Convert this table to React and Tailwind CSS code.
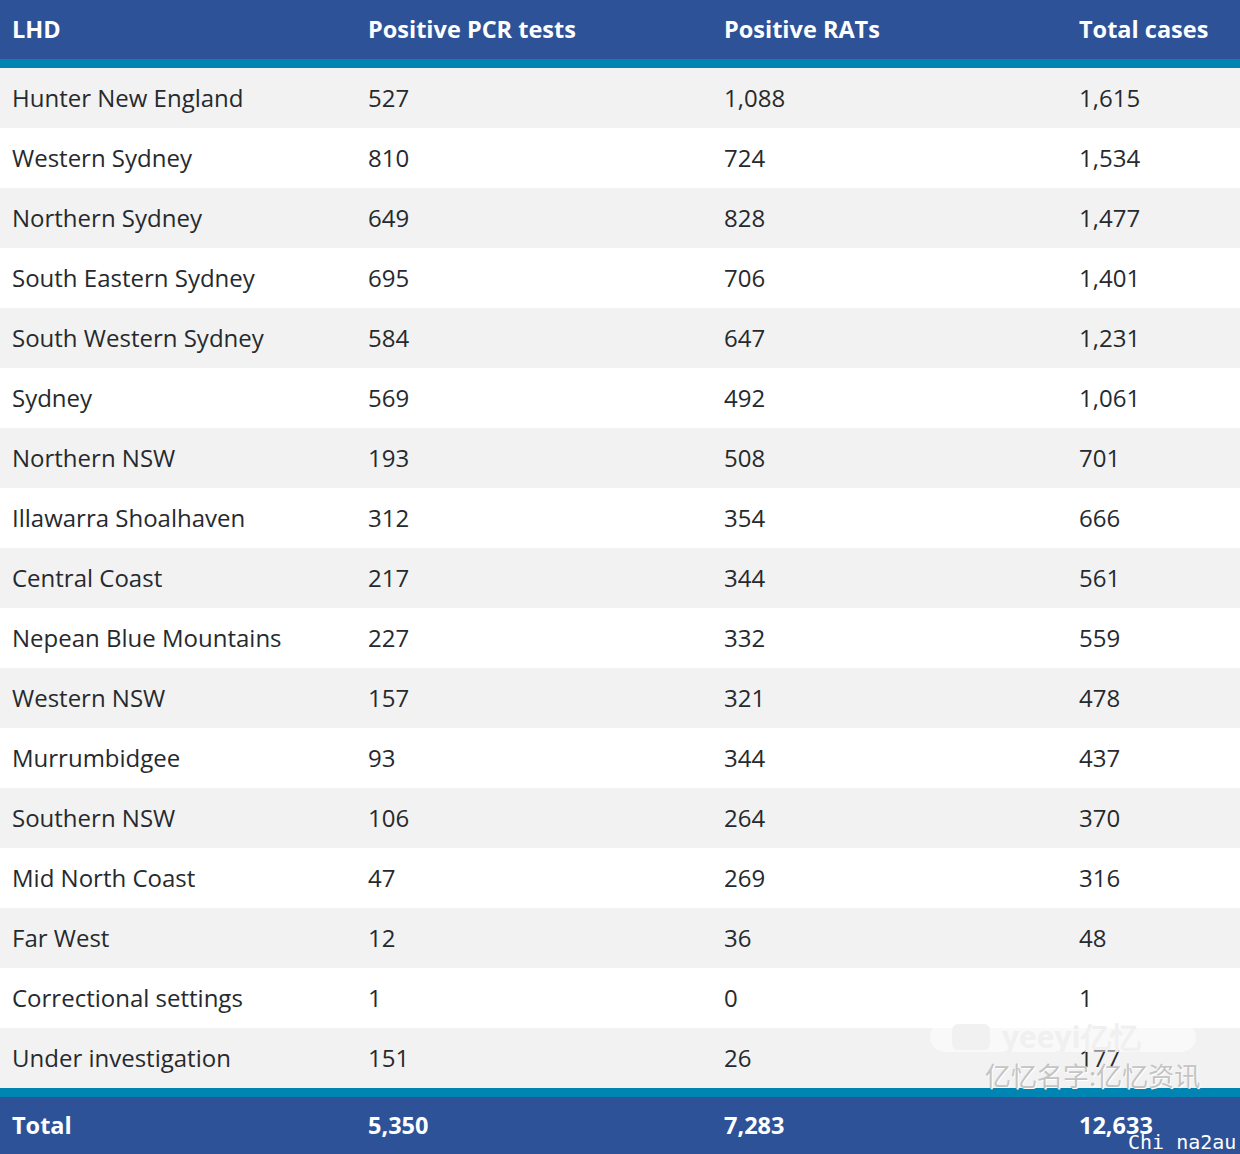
import React from 'react';

const rows = [
  ['Hunter New England', '527', '1,088', '1,615'],
  ['Western Sydney', '810', '724', '1,534'],
  ['Northern Sydney', '649', '828', '1,477'],
  ['South Eastern Sydney', '695', '706', '1,401'],
  ['South Western Sydney', '584', '647', '1,231'],
  ['Sydney', '569', '492', '1,061'],
  ['Northern NSW', '193', '508', '701'],
  ['Illawarra Shoalhaven', '312', '354', '666'],
  ['Central Coast', '217', '344', '561'],
  ['Nepean Blue Mountains', '227', '332', '559'],
  ['Western NSW', '157', '321', '478'],
  ['Murrumbidgee', '93', '344', '437'],
  ['Southern NSW', '106', '264', '370'],
  ['Mid North Coast', '47', '269', '316'],
  ['Far West', '12', '36', '48'],
  ['Correctional settings', '1', '0', '1'],
  ['Under investigation', '151', '26', '177'],
];

export default function App() {
  return (
    <div className="relative w-[1240px] h-[1154px] overflow-hidden bg-white font-['Open_Sans',sans-serif]">
      <div className="grid grid-cols-[356px_356px_355px_1fr] h-[59px] items-center bg-[#2d5297] text-white font-bold text-[23.5px] border-b-[9px] border-[#0085b3] box-content">
        <div className="pl-3">LHD</div>
        <div className="pl-3">Positive PCR tests</div>
        <div className="pl-3">Positive RATs</div>
        <div className="pl-3">Total cases</div>
      </div>
      {rows.map((r, i) => (
        <div
          key={r[0]}
          className={`grid grid-cols-[356px_356px_355px_1fr] h-[60px] items-center text-[24px] text-[#262a2e] ${i % 2 === 0 ? 'bg-[#f2f2f2]' : 'bg-white'}`}
        >
          {r.map((c, j) => (
            <div key={j} className="pl-3">{c}</div>
          ))}
        </div>
      ))}
      <div className="grid grid-cols-[356px_356px_355px_1fr] h-[57px] items-center bg-[#2d5297] text-white font-bold text-[23.5px] border-t-[9px] border-[#0085b3] box-content">
        <div className="pl-3">Total</div>
        <div className="pl-3">5,350</div>
        <div className="pl-3">7,283</div>
        <div className="pl-3">12,633</div>
      </div>

      {/* watermarks */}
      <div className="absolute left-[930px] top-[1022px] w-[266px] h-[30px] rounded-[15px] bg-white/50 flex items-center pl-[22px] gap-3 overflow-hidden">
        <div className="w-[38px] h-[26px] rounded-[6px] bg-[#f1f1f1]" />
        <span className="text-[30px] font-bold text-[#f0f0f0] leading-none whitespace-nowrap">yeeyi亿忆</span>
      </div>
      <div className="absolute left-[985px] top-[1058px] text-[26px] leading-[34px] whitespace-nowrap text-[#c4c4c4] font-['Noto_Sans_CJK_SC',sans-serif] [text-shadow:1px_1px_0_#fff]">
        亿忆名字:亿忆资讯
      </div>
      <div className="absolute left-[1128px] top-[1132px] text-[20px] text-white whitespace-nowrap font-['DejaVu_Sans_Mono',monospace] leading-none">
        Chi na2au
      </div>
    </div>
  );
}
